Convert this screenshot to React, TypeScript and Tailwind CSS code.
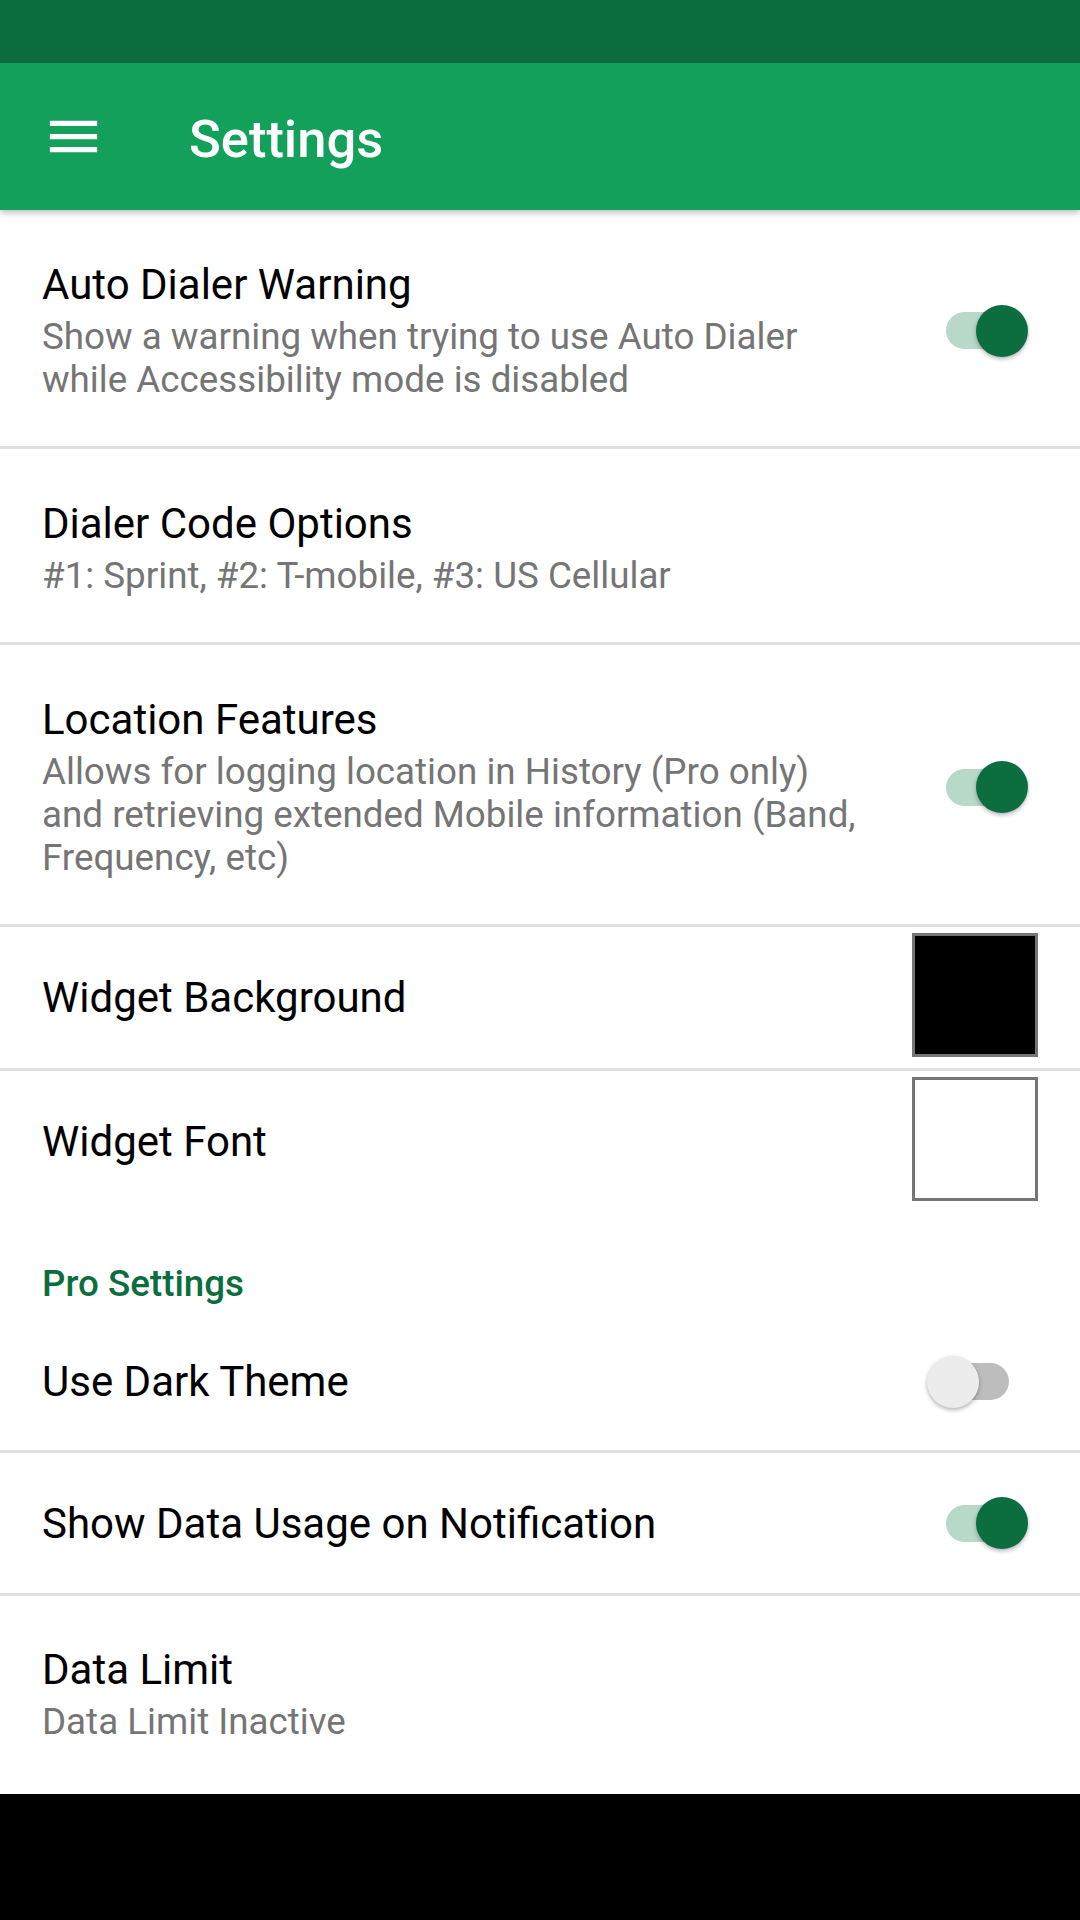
import type { ReactNode } from "react";

function MenuIcon() {
  return (
    <svg width="63" height="63" viewBox="0 0 24 24" fill="white" aria-hidden>
      <path d="M3 18h18v-2H3v2zm0-5h18v-2H3v2zm0-7v2h18V6H3z" />
    </svg>
  );
}

function Switch({ on }: { on: boolean }) {
  return (
    <div className={`relative h-[52px] w-[88px] shrink-0 ${on ? "mr-[52px]" : "mr-[65px]"}`}>
      <div
        className={`absolute left-[6px] right-[6px] top-[7.5px] h-[37px] rounded-full ${
          on ? "bg-[#b8d8c8]" : "bg-[#bdbdbd]"
        }`}
      />
      <div
        className={`absolute top-0 h-[52px] w-[52px] rounded-full shadow-[0_2px_4px_rgba(0,0,0,0.3)] ${
          on ? "right-0 bg-[#0c6e3f]" : "left-0 bg-[#ececec]"
        }`}
      />
    </div>
  );
}

function ColorBox({ color }: { color: "black" | "white" }) {
  return (
    <div
      className={`mr-[42px] mt-[6px] h-[124px] w-[126px] shrink-0 self-start border-[3px] border-[#757575] ${
        color === "black" ? "bg-black" : "bg-white"
      }`}
    />
  );
}

function Title({ children }: { children: ReactNode }) {
  return <div className="text-[42px] leading-[49px] text-black">{children}</div>;
}

function Summary({ children }: { children: ReactNode }) {
  return (
    <div className="mt-[6px] whitespace-pre-line text-[36.75px] leading-[43px] text-[#757575]">
      {children}
    </div>
  );
}

function TextRow({
  title,
  summary,
  right,
}: {
  title: string;
  summary?: string;
  right?: ReactNode;
}) {
  return (
    <div className="flex items-center border-b-[3px] border-[#e0e0e0] pb-[45px] pl-[42px] pt-[50px]">
      <div className="flex-1">
        <Title>{title}</Title>
        {summary && <Summary>{summary}</Summary>}
      </div>
      {right}
    </div>
  );
}

function SimpleRow({
  title,
  right,
  height,
  divider = true,
}: {
  title: string;
  right?: ReactNode;
  height: string;
  divider?: boolean;
}) {
  return (
    <div
      className={`flex items-center pl-[42px] ${height} ${
        divider ? "border-b-[3px] border-[#e0e0e0]" : ""
      }`}
    >
      <div className="flex-1">
        <Title>{title}</Title>
      </div>
      {right}
    </div>
  );
}

export default function App() {
  return (
    <div className="flex h-[1920px] w-[1080px] flex-col overflow-hidden bg-white font-['Roboto',sans-serif]">
      {/* status bar */}
      <div className="h-[63px] shrink-0 bg-[#0c6e3f]" />

      {/* toolbar */}
      <div className="relative z-10 flex h-[147px] shrink-0 items-center bg-[#13a05a] shadow-[0_3px_6px_rgba(0,0,0,0.25)]">
        <div className="ml-[42px] flex h-[63px] w-[63px] items-center justify-center">
          <MenuIcon />
        </div>
        <h1 className="ml-[84px] mt-[5px] text-[52.5px] font-medium leading-none text-white">Settings</h1>
      </div>

      <div className="flex flex-1 flex-col">
        <TextRow
          title="Auto Dialer Warning"
          summary={"Show a warning when trying to use Auto Dialer\nwhile Accessibility mode is disabled"}
          right={<Switch on />}
        />
        <TextRow title="Dialer Code Options" summary="#1: Sprint, #2: T-mobile, #3: US Cellular" />
        <TextRow
          title="Location Features"
          summary={
            "Allows for logging location in History (Pro only)\nand retrieving extended Mobile information (Band,\nFrequency, etc)"
          }
          right={<Switch on />}
        />
        <SimpleRow title="Widget Background" height="h-[144px]" right={<ColorBox color="black" />} />
        <SimpleRow title="Widget Font" height="h-[140px]" divider={false} right={<ColorBox color="white" />} />

        <div className="h-[102px] pl-[42px] pt-[51px]">
          <div className="text-[36.75px] font-medium leading-[43px] text-[#0c6e3f]">Pro Settings</div>
        </div>

        <SimpleRow title="Use Dark Theme" height="h-[140px]" right={<Switch on={false} />} />
        <SimpleRow title="Show Data Usage on Notification" height="h-[143px]" right={<Switch on />} />
        <div className="flex-1 pl-[42px] pt-[49px]">
          <Title>Data Limit</Title>
          <Summary>Data Limit Inactive</Summary>
        </div>
      </div>

      {/* nav bar */}
      <div className="h-[126px] shrink-0 bg-black" />
    </div>
  );
}
